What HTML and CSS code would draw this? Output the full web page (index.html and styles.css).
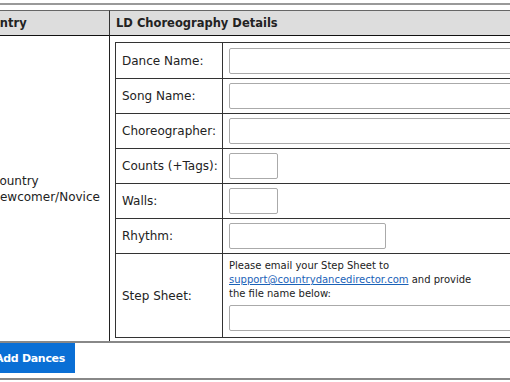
FILE: index.html
```html
<!DOCTYPE html>
<html lang="en">
<head>
  <meta charset="UTF-8">
  <title>LD Choreography Entry</title>
  <meta name="viewport" content="width=device-width, initial-scale=1.0">
  <link rel="stylesheet" href="styles.css">
</head>
<body>

  <div class="page">
    <div class="rule"></div>

    <div class="entries">
      <div class="head head-entry">Entry</div>
      <div class="head">LD Choreography Details</div>

      <div class="entry">Country<br>Newcomer/Novice</div>

      <div class="details">
        <div class="form">
          <label class="lbl" for="dance">Dance Name:</label>
          <div class="fld"><input type="text" id="dance" class="wide"></div>

          <label class="lbl" for="song">Song Name:</label>
          <div class="fld"><input type="text" id="song" class="wide"></div>

          <label class="lbl" for="choreo">Choreographer:</label>
          <div class="fld"><input type="text" id="choreo" class="wide"></div>

          <label class="lbl" for="counts">Counts (+Tags):</label>
          <div class="fld"><input type="text" id="counts" class="short"></div>

          <label class="lbl" for="walls">Walls:</label>
          <div class="fld"><input type="text" id="walls" class="short"></div>

          <label class="lbl" for="rhythm">Rhythm:</label>
          <div class="fld"><input type="text" id="rhythm" class="mid"></div>

          <label class="lbl" for="sheet">Step Sheet:</label>
          <div class="fld step">
            Please email your Step Sheet to<br>
            <a href="mailto:support@countrydancedirector.com">support@countrydancedirector.com</a> and provide<br>
            the file name below:
            <input type="text" id="sheet" class="wide">
          </div>
        </div>
      </div>

      <div class="actions">
        <button type="button">Add Dances</button>
      </div>
    </div>
  </div>

</body>
</html>
```

FILE: styles.css
```css
body {
  margin: 0;
  overflow: hidden;
  background: #fff;
  font-family: "DejaVu Sans", Verdana, sans-serif;
  color: #222;
}

.page {
  margin-left: -24px;
  width: 640px;
  padding-top: 3px;
}

.rule {
  border-top: 2px solid #999;
  margin-bottom: 5px;
}

.entries {
  display: grid;
  grid-template-columns: 134px 1fr;
}

.head {
  box-sizing: border-box;
  height: 26px;
  display: flex;
  align-items: center;
  padding-left: 6px;
  background: #ddd;
  border-top: 1px solid #666;
  border-bottom: 1px solid #111;
  font-size: 11.5px;
  font-weight: bold;
}

.head-entry {
  padding-left: 16px;
  border-right: 1px solid #333;
}

.entry {
  display: flex;
  align-items: center;
  padding-left: 15px;
  border-right: 1px solid #222;
  font-size: 12px;
  line-height: 16px;
}

.details {
  padding: 6px 5px 3px 5px;
}

.form {
  display: grid;
  grid-template-columns: 107px 1fr;
  grid-template-rows: 36px repeat(5, 35px) auto;
  border: 1px solid #333;
}

.form > * {
  box-sizing: border-box;
  border-bottom: 1px solid #333;
}

.form > :nth-last-child(-n+2) {
  border-bottom: 0;
}

.lbl {
  display: flex;
  align-items: center;
  padding-left: 6px;
  border-right: 1px solid #333;
  font-size: 12px;
}

.fld {
  display: flex;
  align-items: center;
  padding-left: 6px;
}

.fld.step {
  display: block;
  padding: 5px 6px 6px 6px;
  font-size: 10px;
  line-height: 14px;
  white-space: nowrap;
}

.step a {
  color: #1a62b8;
}

.step input {
  display: block;
  margin-top: 4px;
}

input {
  box-sizing: border-box;
  height: 26px;
  padding: 0 4px;
  border: 1px solid #aaa;
  border-radius: 2px;
  background: #fff;
  font: inherit;
}

.wide {
  width: 330px;
}

.short {
  width: 49px;
}

.mid {
  width: 157px;
}

.actions {
  grid-column: 1 / -1;
  border-top: 2px solid #888;
  border-bottom: 2px solid #888;
  padding-bottom: 5px;
}

button {
  display: block;
  height: 30px;
  padding: 0 10px 0 19px;
  border: 0;
  background: #0a6fd5;
  color: #fff;
  font-family: "DejaVu Sans", Verdana, sans-serif;
  font-size: 11px;
  font-weight: bold;
  letter-spacing: -0.3px;
  cursor: pointer;
}
```
